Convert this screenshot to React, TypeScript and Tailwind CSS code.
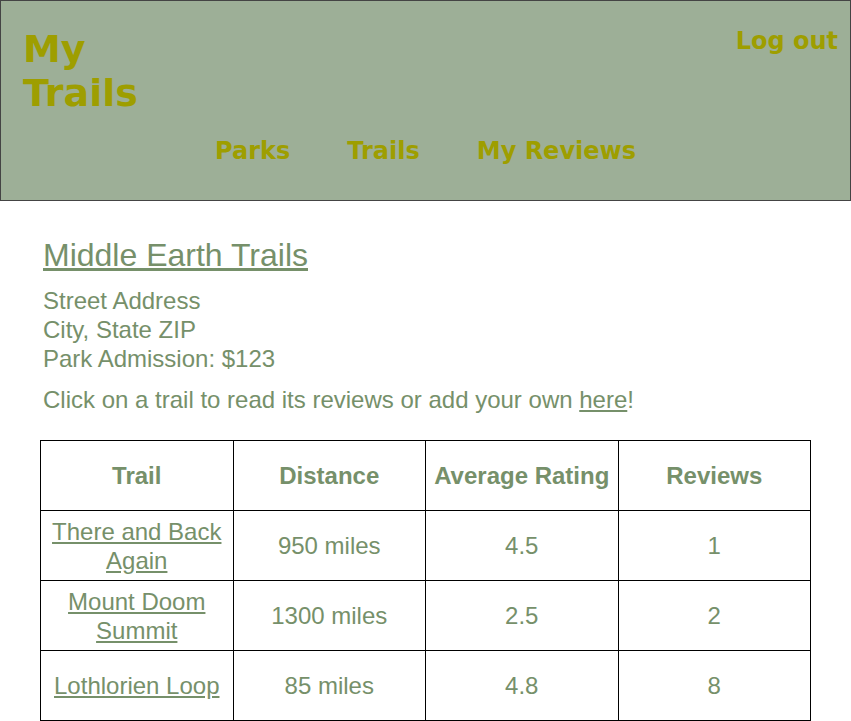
import React from "react";

const trails = [
  { name: "There and Back Again", distance: "950 miles", rating: "4.5", reviews: "1" },
  { name: "Mount Doom Summit", distance: "1300 miles", rating: "2.5", reviews: "2" },
  { name: "Lothlorien Loop", distance: "85 miles", rating: "4.8", reviews: "8" },
];

export default function App() {
  return (
    <div className="min-h-screen bg-white">
      <header
        className="h-[201px] border border-[#444444] bg-[#9daf97] pt-[26px] pl-[22px] pr-[12px] text-[#9e9e00]"
        style={{ fontFamily: '"DejaVu Sans", Verdana, sans-serif' }}
      >
        <div className="flex items-start justify-between">
          <h1 className="w-[130px] text-[38px] font-bold leading-[44px]">My Trails</h1>
          <a href="#" className="text-[24px] font-bold leading-[28px]">Log out</a>
        </div>
        <nav className="mt-[22px] flex justify-center gap-[57px] pr-[10px] text-[24px] font-bold leading-[28px]">
          <a href="#">Parks</a>
          <a href="#">Trails</a>
          <a href="#">My Reviews</a>
        </nav>
      </header>

      <main
        className="px-[40px] pt-[36px] text-[#76906a]"
        style={{ fontFamily: '"Liberation Sans", Arial, Helvetica, sans-serif' }}
      >
        <div className="pl-[3px]">
          <h2 className="text-[32px] leading-[37px]">
            <a href="#" className="underline">Middle Earth Trails</a>
          </h2>
          <div className="mt-[12px] text-[24px] leading-[29px]">
            <p>Street Address</p>
            <p>City, State ZIP</p>
            <p>Park Admission: $123</p>
          </div>
          <p className="mt-[12px] text-[24px] leading-[29px]">
            Click on a trail to read its reviews or add your own{" "}
            <a href="#" className="underline">here</a>!
          </p>
        </div>

        <table className="mt-[26px] w-[771px] table-fixed border-collapse text-center text-[24px] leading-[29px]">
          <thead>
            <tr>
              <th className="h-[70px] border border-black px-[6px] font-bold">Trail</th>
              <th className="h-[70px] border border-black px-[6px] font-bold">Distance</th>
              <th className="h-[70px] border border-black px-[6px] font-bold">Average Rating</th>
              <th className="h-[70px] border border-black px-[6px] font-bold">Reviews</th>
            </tr>
          </thead>
          <tbody>
            {trails.map((t) => (
              <tr key={t.name}>
                <td className="h-[70px] border border-black px-[6px]">
                  <a href="#" className="underline">{t.name}</a>
                </td>
                <td className="h-[70px] border border-black px-[6px]">{t.distance}</td>
                <td className="h-[70px] border border-black px-[6px]">{t.rating}</td>
                <td className="h-[70px] border border-black px-[6px]">{t.reviews}</td>
              </tr>
            ))}
          </tbody>
        </table>
      </main>
    </div>
  );
}
